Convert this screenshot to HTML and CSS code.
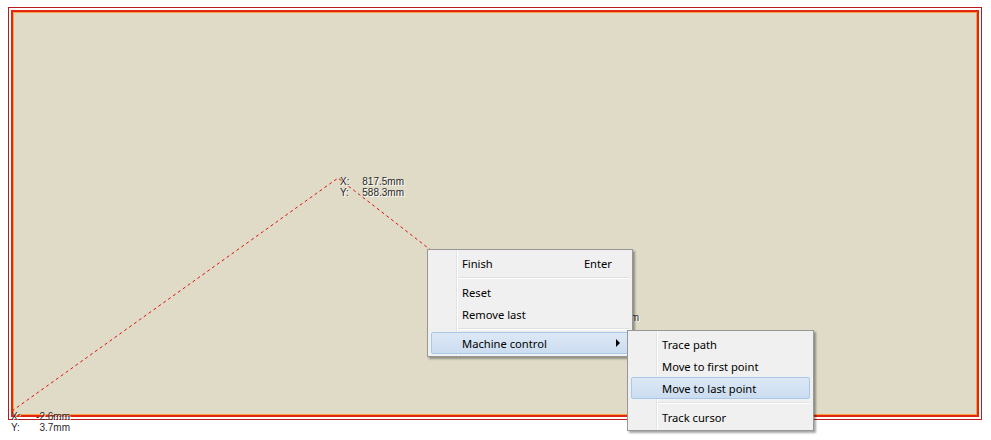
FILE: index.html
```html
<!DOCTYPE html>
<html lang="en">

<head>
  <meta charset="UTF-8">
  <title>path editor</title>
  <link rel="stylesheet" href="styles.css">
</head>

<body>
  <div class="canvas">
    <div class="frame">
      <div class="table"></div>
    </div>

    <svg class="path" width="991" height="440" viewBox="0 0 991 440">
      <polyline points="12,411 338,178 432,251" />
    </svg>

    <div class="coord" style="left: 340px; top: 176px; width: 64px;">
      <span>X:</span><span class="val">817.5mm</span>
      <span>Y:</span><span class="val">588.3mm</span>
    </div>
    <div class="coord" style="left: 11px; top: 411px; width: 59px;">
      <span>X:</span><span class="val">-2.6mm</span>
      <span>Y:</span><span class="val">3.7mm</span>
    </div>
    <div class="coord" style="left: 576px; top: 312px; width: 63px;">
      <span>X:</span><span class="val">641.0mm</span>
    </div>

    <div class="menu menu-main">
      <div class="item"><span>Finish</span><span class="key">Enter</span></div>
      <div class="sep"></div>
      <div class="item"><span>Reset</span></div>
      <div class="item"><span>Remove last</span></div>
      <div class="sep"></div>
      <div class="item active"><span>Machine control</span><span class="arrow"></span></div>
    </div>

    <div class="menu menu-sub">
      <div class="item"><span>Trace path</span></div>
      <div class="item"><span>Move to first point</span></div>
      <div class="item active"><span>Move to last point</span></div>
      <div class="sep"></div>
      <div class="item"><span>Track cursor</span></div>
    </div>
  </div>
</body>

</html>
```

FILE: styles.css
```css
body {
  margin: 0;
  padding: 0;
  background-color: #FFFFFF;
  font-family: 'Noto Sans', 'Open Sans', sans-serif;
}

.canvas {
  position: relative;
  width: 991px;
  height: 440px;
  overflow: hidden;
}

/* work area outline: thin outer line, white gap, thick red line */
.frame {
  margin: 7px 0 0 8px;
  width: 968px;
  height: 407px;
  border: 1px solid #B81C1C;
  padding: 2px;
}

.table {
  height: 100%;
  box-sizing: border-box;
  background-color: #DFDBC7;
  border: 2px solid #E3260E;
  box-shadow: inset 0 0 0 1px #F6A24A;
}

.path {
  position: absolute;
  top: 0;
  left: 0;
}

.path polyline {
  fill: none;
  stroke: #E01010;
  stroke-width: 1;
  stroke-dasharray: 3 3;
}

/* coordinate readouts, values right aligned */
.coord {
  position: absolute;
  display: grid;
  grid-template-columns: auto 1fr;
  font-family: 'Liberation Sans', Arial, sans-serif;
  font-size: 10px;
  line-height: 11px;
  color: #2A2A2A;
  text-shadow: 1px 1px 0 #FFFFFF;
  white-space: nowrap;
}

.coord .val {
  text-align: right;
}

.menu {
  position: absolute;
  box-sizing: border-box;
  background-color: #F0F0F0;
  border: 1px solid #979797;
  box-shadow: 2px 2px 2px rgba(0, 0, 0, 0.35);
  padding: 2px 3px;
  font-size: 11.2px;
  color: #000000;
  /* icon gutter line */
  background-image: linear-gradient(to right, transparent 28px, #E2E3E3 28px, #E2E3E3 29px, #FFFFFF 29px, #FFFFFF 30px, transparent 30px);
}

.menu-main {
  left: 427px;
  top: 249px;
  width: 206px;
}

.menu-sub {
  left: 627px;
  top: 330px;
  width: 187px;
}

.menu .item {
  height: 22px;
  box-sizing: border-box;
  display: flex;
  align-items: center;
  justify-content: space-between;
  padding: 0 17px 0 30px;
  border: 1px solid transparent;
  border-radius: 2px;
}

.menu .item.active {
  border-color: #A8C8EA;
  background: linear-gradient(#DCE8F5, #CCDDF1);
}

.menu .key {
  margin-right: -1px;
}

.menu .arrow {
  width: 0;
  height: 0;
  margin-right: -9px;
  border-top: 4px solid transparent;
  border-bottom: 4px solid transparent;
  border-left: 4px solid #000000;
}

.menu .sep {
  height: 7px;
  margin-left: 27px;
  background-image: linear-gradient(transparent 3px, #E0E0E0 3px, #E0E0E0 4px, #FFFFFF 4px, #FFFFFF 5px, transparent 5px);
}
```
